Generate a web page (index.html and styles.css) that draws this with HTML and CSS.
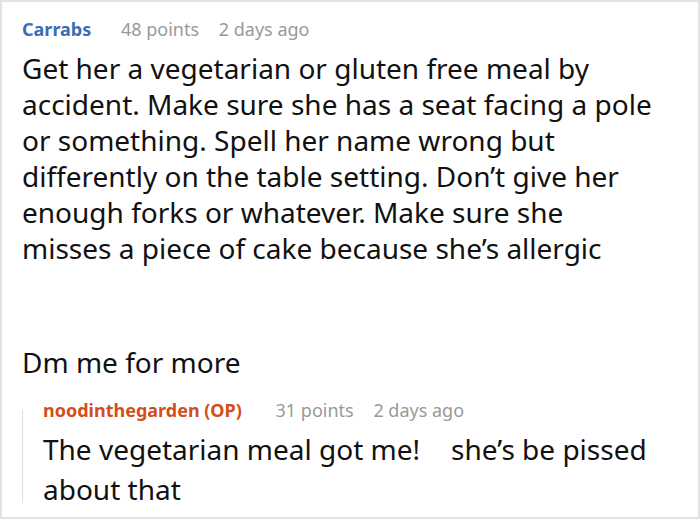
FILE: index.html
```html
<!DOCTYPE html>
<html>
<head>
<meta charset="utf-8">
<link rel="stylesheet" href="styles.css">
</head>
<body>
<div class="card">
  <div class="comment">
    <div class="meta">
      <span class="author">Carrabs</span>
      <span class="points">48 points</span>
      <span class="time">2 days ago</span>
    </div>
    <div class="body">
      <p class="para">Get her a vegetarian or gluten free meal by accident. Make sure she has a seat facing a pole or something. Spell her name wrong but differently on the table setting. Don’t give her enough forks or whatever. Make sure she misses a piece of cake because she’s allergic</p>
      <p class="para">Dm me for more</p>
    </div>
    <div class="reply">
      <div class="rule"></div>
      <div class="reply-content">
        <div class="meta">
          <span class="author op">noodinthegarden (OP)</span>
          <span class="points reply-points">31 points</span>
          <span class="time">2 days ago</span>
        </div>
        <div class="reply-body">
          <p>The vegetarian meal got me!<span class="gap"></span>she’s be pissed about that</p>
        </div>
      </div>
    </div>
  </div>
</div>
</body>
</html>
```
FILE: styles.css
```css
html, body {
  margin: 0;
  padding: 0;
  background: #fff;
}
.card {
  box-sizing: border-box;
  width: 700px;
  height: 519px;
  border: 2px solid #e3e3e3;
  background: #fff;
  font-family: "Noto Sans", "Open Sans", sans-serif;
  color: #111;
  overflow: hidden;
}
.comment {
  padding: 15px 43px 0 20px;
}
.meta {
  font-size: 18px;
  line-height: 24px;
  color: #999;
  white-space: nowrap;
}
.author {
  font-weight: bold;
  color: #3a6cb8;
}
.author.op {
  color: #d24f1c;
}
.points {
  margin-left: 25px;
}
.reply-points {
  margin-left: 29px;
}
.time {
  margin-left: 15px;
}
.body {
  margin-top: 9px;
}
.para {
  margin: 0 0 78px 0;
  font-size: 28px;
  line-height: 36px;
}
.body .para:last-child {
  margin-bottom: 0;
}
.reply {
  display: flex;
  margin-top: 18px;
}
.rule {
  width: 1px;
  background: #dedede;
  margin-top: 12px;
  margin-bottom: 6px;
  flex: none;
}
.reply-content {
  padding-left: 20px;
}
.reply-body {
  margin-top: 7px;
}
.reply-body p {
  margin: 0;
  font-size: 28px;
  line-height: 40px;
}
.gap {
  display: inline-block;
  width: 31px;
}
```
